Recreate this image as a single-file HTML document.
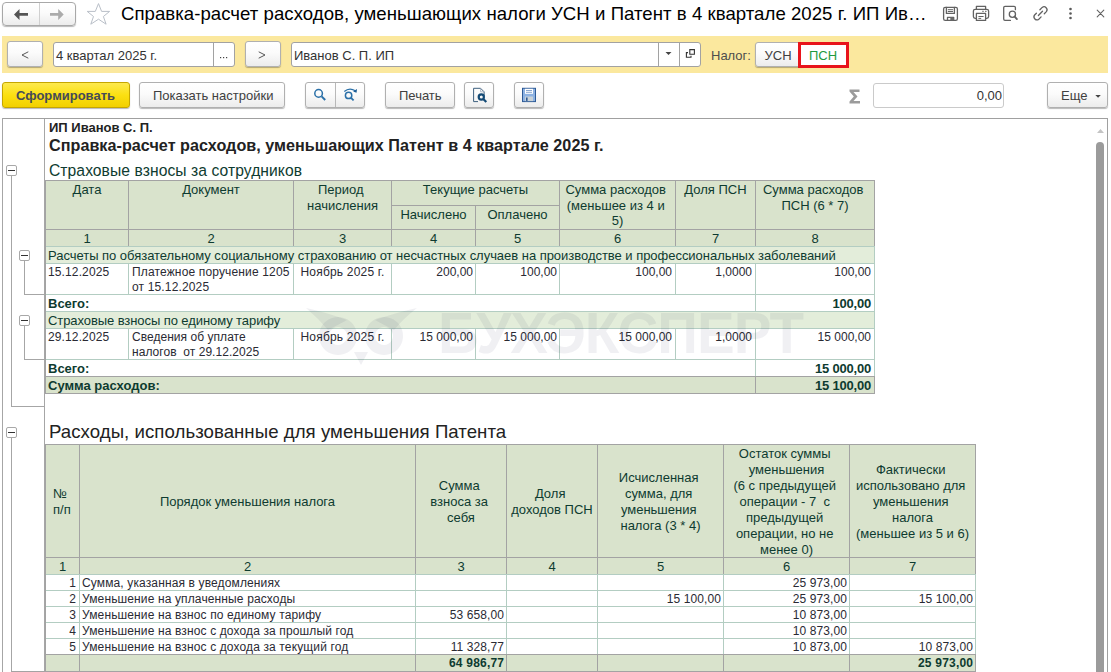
<!DOCTYPE html>
<html><head><meta charset="utf-8">
<style>
*{box-sizing:border-box;margin:0;padding:0}
html,body{width:1111px;height:672px;overflow:hidden;background:#fff;font-family:"Liberation Sans",sans-serif;color:#333;position:relative}
.a{position:absolute}
.btn{position:absolute;border:1px solid #b0b0b0;border-radius:3px;background:linear-gradient(#ffffff 0%,#fbfbfb 45%,#ececec 100%);box-shadow:0 1px 1px rgba(0,0,0,.28)}
.inp{position:absolute;border:1px solid #a2a2a2;border-radius:3px;background:#fff}
.t{position:absolute;white-space:nowrap;line-height:1}
.f13{font-size:13px}
svg{position:absolute;overflow:visible}
</style></head><body>
<!-- title bar -->
<div class="btn" style="left:2px;top:2px;width:74px;height:24px;border-radius:4px;border-color:#a8a8a8"></div>
<div class="a" style="left:39px;top:3px;width:1px;height:22px;background:#d0d0d0"></div>
<svg style="left:0;top:0" width="80" height="30"><path d="M14 14.4 L19.5 9 L19.5 13.1 L28 13.1 L28 15.8 L19.5 15.8 L19.5 19.9 Z" fill="#555"/><path d="M63.7 14.4 L58.2 9 L58.2 13.1 L50 13.1 L50 15.8 L58.2 15.8 L58.2 19.9 Z" fill="#ababab"/></svg>
<svg style="left:0;top:0" width="120" height="30"><path d="M98.5 3.6 L101.6 11.4 L109.6 11.4 L103.4 16.5 L106.1 24.2 L98.5 19.2 L90.8 24.2 L93.5 16.5 L87.2 11.4 L95.3 11.4 Z" fill="none" stroke="#b9bfc8" stroke-width="1"/></svg>
<div class="t" style="left:121px;top:5px;font-size:18.6px;color:#000;letter-spacing:0.04px">Справка-расчет расходов, уменьшающих налоги УСН и Патент в 4 квартале 2025 г. ИП Ив…</div>
<!-- title icons -->
<svg style="left:0;top:0" width="1111" height="30">
 <g fill="none" stroke="#626262" stroke-width="1.3" stroke-linecap="round" stroke-linejoin="round">
  <rect x="943.6" y="7.3" width="13.8" height="13" rx="1.6"/>
  <path d="M946.4 7.3 v6.1 h8 v-6.1"/>
  <path d="M948.2 9.7 h4.4 M948.2 11.5 h4.4" stroke-width="1"/>
  <path d="M947.5 20.3 v-3 h6.2 v3"/>
  <path d="M976.4 9.3 v-2.9 h9.2 v2.9"/>
  <path d="M976.2 18.3 h-1 a1.8 1.8 0 0 1 -1.8 -1.8 v-5.4 a1.8 1.8 0 0 1 1.8 -1.8 h11.6 a1.8 1.8 0 0 1 1.8 1.8 v5.4 a1.8 1.8 0 0 1 -1.8 1.8 h-1"/>
  <rect x="976.4" y="13.4" width="9.2" height="7"/>
  <path d="M978.8 16.5 h4.4 M978.8 18.4 h2" stroke-width="1"/>
  <path d="M982.6 11.3 h0.8 M985.4 11.3 h0.8" stroke-width="1"/>
  <path d="M1010.4 20.4 h-5.4 a1.3 1.3 0 0 1 -1.3 -1.3 v-11.5 a1.3 1.3 0 0 1 1.3 -1.3 h9.1 a1.3 1.3 0 0 1 1.3 1.3 v2.1"/>
  <circle cx="1012.4" cy="14.3" r="3.1"/>
  <path d="M1014.7 16.7 l2.2 2.4" stroke-width="1.9"/>
  <path d="M1039.9 9.7 L1042.2 7.4 A3 3 0 0 1 1046.4 11.6 L1044.3 13.7"/>
  <path d="M1036.4 13.2 L1034.6 15.0 A3 3 0 0 0 1038.8 19.2 L1041.1 16.9"/>
  <path d="M1038.4 15.5 L1042.5 11.3"/>
  <path d="M1097.2 10.2 l6.6 6.6 M1103.8 10.2 l-6.6 6.6" stroke-width="1.1"/>
 </g>
 <rect x="950.3" y="17.3" width="2.8" height="3" fill="#6a6a6a"/>
 <g fill="#5a5a5a"><circle cx="1070.5" cy="9" r="1.3"/><circle cx="1070.5" cy="13.5" r="1.3"/><circle cx="1070.5" cy="18" r="1.3"/></g>
</svg>

<!-- yellow bar -->
<div class="a" style="left:2px;top:36px;width:1106px;height:37px;background:#fbe89e"></div>
<div class="btn" style="left:7px;top:41px;width:36px;height:26px"></div>
<svg style="left:0;top:0" width="60" height="70"><path d="M28.3 51.8 L22 55 L28.3 58.2" fill="none" stroke="#444" stroke-width="0.9"/></svg>
<div class="inp" style="left:53px;top:42px;width:182px;height:25px"></div>
<div class="a" style="left:213px;top:43px;width:1px;height:23px;background:#a2a2a2"></div>
<div class="t f13" style="left:56px;top:49px;color:#333">4 квартал 2025 г.</div>
<svg style="left:0;top:0" width="240" height="70"><g fill="#444"><rect x="220" y="57" width="1.2" height="1.2"/><rect x="223" y="57" width="1.2" height="1.2"/><rect x="226" y="57" width="1.2" height="1.2"/></g></svg>
<div class="btn" style="left:245px;top:41px;width:36px;height:26px"></div>
<svg style="left:0;top:0" width="300" height="70"><path d="M258.7 51.8 L265 55 L258.7 58.2" fill="none" stroke="#444" stroke-width="0.9"/></svg>
<div class="inp" style="left:291px;top:42px;width:410px;height:25px"></div>
<div class="a" style="left:658px;top:43px;width:1px;height:23px;background:#a2a2a2"></div>
<div class="a" style="left:679px;top:43px;width:1px;height:23px;background:#a2a2a2"></div>
<div class="t f13" style="left:294px;top:49px;color:#333">Иванов С. П. ИП</div>
<svg style="left:0;top:0" width="720" height="70"><path d="M665.5 52 h6 l-3 3 z" fill="#444"/><g fill="none" stroke="#333" stroke-width="1.1"><path d="M689.8 49.6 h4.6 v4.6 h-4.6 z"/><path d="M688 52.6 h-1.6 v4.6 h4.6 v-1.4"/></g></svg>
<div class="t f13" style="left:711px;top:49px;color:#4d4d4d">Налог:</div>
<div class="btn" style="left:755px;top:42px;width:50px;height:25px"></div>
<div class="t f13" style="left:764.5px;top:49px;color:#404040">УСН</div>
<div class="a" style="left:798px;top:42px;width:51px;height:26px;border:3px solid #e8141b;background:#fff"></div>
<div class="t f13" style="left:809px;top:49px;color:#1f9a3e">ПСН</div>

<!-- toolbar -->
<div class="btn" style="left:2px;top:82px;width:128px;height:26px;background:linear-gradient(#fde94e,#fbe012 50%,#f2d000);border-color:#c5a600"></div>
<div class="t f13" style="left:16px;top:89px;font-weight:bold;color:#454b58">Сформировать</div>
<div class="btn" style="left:139px;top:82px;width:146px;height:26px"></div>
<div class="t f13" style="left:153px;top:89px;color:#404040">Показать настройки</div>
<div class="btn" style="left:305px;top:82px;width:60px;height:26px"></div>
<div class="a" style="left:335px;top:83px;width:1px;height:24px;background:#b8b8b8"></div>
<svg style="left:0;top:0" width="370" height="110"><g fill="none" stroke="#2a70a8" stroke-width="1.5"><circle cx="318.6" cy="93.4" r="3.8"/><path d="M321.6 96.4 l3.6 3.6" stroke-width="2"/><circle cx="348.6" cy="95.4" r="3.2"/><path d="M351 97.8 l2.6 2.6" stroke-width="1.8"/><path d="M344.3 91.6 q5 -4.5 11 -0.8" stroke-width="1.3"/></g><path d="M357 89 l-0.5 3.8 l-3.4 -1.3 z" fill="#1a5c96"/></svg>
<div class="btn" style="left:385px;top:82px;width:70px;height:26px"></div>
<div class="t f13" style="left:399px;top:89px;color:#404040">Печать</div>
<div class="btn" style="left:464px;top:82px;width:30px;height:26px"></div>
<svg style="left:0;top:0" width="500" height="110"><path d="M473.6 88.3 h7 l3.5 3.5 v4 M478 101.6 h-4.4 v-13.3" fill="none" stroke="#3d5f7e" stroke-width="1"/><path d="M480.6 88.3 v3.5 h3.5" fill="none" stroke="#9aaabb" stroke-width="0.8"/><circle cx="481.3" cy="97" r="2.6" fill="none" stroke="#134a75" stroke-width="2.2"/><path d="M483.3 99 l3 3" stroke="#134a75" stroke-width="2.2"/></svg>
<div class="btn" style="left:514px;top:82px;width:30px;height:26px"></div>
<svg style="left:0;top:0" width="550" height="110"><rect x="522.5" y="88.3" width="13" height="13.3" fill="#8db2e2" stroke="#2d5a96" stroke-width="1"/><rect x="525" y="88.8" width="8" height="5" fill="#fff"/><path d="M526 90.5 h6 M526 92.3 h6" stroke="#6b8fc2" stroke-width="0.8"/><rect x="525" y="96.5" width="8" height="4.6" fill="#c9d2d8"/><rect x="526" y="97.5" width="1.6" height="3.4" fill="#2d5a96"/></svg>

<svg style="left:0;top:0" width="870" height="110"><path d="M849.5 89.5 h10 v2.5 h-6 l4 4.5 l-4 4.5 h6.5 v2.5 h-10.5 v-2 l4.3 -5 l-4.3 -5 z" fill="#9b9b9b"/></svg>
<div class="inp" style="left:873px;top:83px;width:131px;height:25px;border-color:#cacaca"></div>
<div class="t f13" style="right:109px;top:89px;color:#333">0,00</div>
<div class="btn" style="left:1047px;top:82px;width:61px;height:26px"></div>
<div class="t f13" style="left:1061px;top:89px;color:#404040">Еще</div>
<svg style="left:0;top:0" width="1111" height="110"><path d="M1095.3 95 h5.5 l-2.75 2.8 z" fill="#444"/></svg>

<!-- report frame -->
<div class="a" style="left:2px;top:118px;width:1106px;height:560px;border:1px solid #a0a0a0"></div>
<div class="t" style="top:121px;font-size:13px;color:#222;font-weight:bold;left:49px;">ИП Иванов С. П.</div>
<div class="t" style="top:137px;font-size:16.17px;color:#222;font-weight:bold;letter-spacing:0.03px;left:49px;">Справка-расчет расходов, уменьшающих Патент в 4 квартале 2025 г.</div>
<div class="t" style="top:163px;font-size:15.65px;color:#0e3b30;letter-spacing:0.07px;left:49px;">Страховые взносы за сотрудников</div>
<div class="a" style="left:45px;top:180px;width:830px;height:50px;background:#d9e3cc"></div>
<div class="a" style="left:45px;top:229px;width:830px;height:17px;background:#d9e3cc"></div>
<div class="a" style="left:45px;top:246px;width:830px;height:17px;background:#e3edda"></div>
<div class="a" style="left:45px;top:311px;width:830px;height:17px;background:#e3edda"></div>
<div class="a" style="left:45px;top:376px;width:830px;height:17px;background:#d9e3cc"></div>
<div class="a" style="left:45px;top:180px;width:830px;height:1px;background:#a3a3a3"></div>
<div class="a" style="left:391px;top:205px;width:168px;height:1px;background:#a3a3a3"></div>
<div class="a" style="left:45px;top:229px;width:830px;height:1px;background:#a3a3a3"></div>
<div class="a" style="left:45px;top:246px;width:830px;height:1px;background:#b3cdc2"></div>
<div class="a" style="left:45px;top:263px;width:830px;height:1px;background:#b3cdc2"></div>
<div class="a" style="left:45px;top:294px;width:830px;height:1px;background:#b3cdc2"></div>
<div class="a" style="left:45px;top:311px;width:830px;height:1px;background:#b3cdc2"></div>
<div class="a" style="left:45px;top:328px;width:830px;height:1px;background:#b3cdc2"></div>
<div class="a" style="left:45px;top:359px;width:830px;height:1px;background:#b3cdc2"></div>
<div class="a" style="left:45px;top:376px;width:830px;height:1px;background:#a3a3a3"></div>
<div class="a" style="left:45px;top:393px;width:830px;height:1px;background:#a3a3a3"></div>
<div class="a" style="left:45px;top:180px;width:1px;height:50px;background:#a3a3a3"></div>
<div class="a" style="left:128px;top:180px;width:1px;height:50px;background:#a3a3a3"></div>
<div class="a" style="left:293px;top:180px;width:1px;height:50px;background:#a3a3a3"></div>
<div class="a" style="left:391px;top:180px;width:1px;height:50px;background:#a3a3a3"></div>
<div class="a" style="left:475px;top:180px;width:1px;height:0px;background:#a3a3a3"></div>
<div class="a" style="left:559px;top:180px;width:1px;height:50px;background:#a3a3a3"></div>
<div class="a" style="left:675px;top:180px;width:1px;height:50px;background:#a3a3a3"></div>
<div class="a" style="left:755px;top:180px;width:1px;height:50px;background:#a3a3a3"></div>
<div class="a" style="left:874px;top:180px;width:1px;height:50px;background:#a3a3a3"></div>
<div class="a" style="left:475px;top:205px;width:1px;height:25px;background:#a3a3a3"></div>
<div class="a" style="left:45px;top:229px;width:1px;height:17px;background:#a3a3a3"></div>
<div class="a" style="left:128px;top:229px;width:1px;height:17px;background:#a3a3a3"></div>
<div class="a" style="left:293px;top:229px;width:1px;height:17px;background:#a3a3a3"></div>
<div class="a" style="left:391px;top:229px;width:1px;height:17px;background:#a3a3a3"></div>
<div class="a" style="left:475px;top:229px;width:1px;height:17px;background:#a3a3a3"></div>
<div class="a" style="left:559px;top:229px;width:1px;height:17px;background:#a3a3a3"></div>
<div class="a" style="left:675px;top:229px;width:1px;height:17px;background:#a3a3a3"></div>
<div class="a" style="left:755px;top:229px;width:1px;height:17px;background:#a3a3a3"></div>
<div class="a" style="left:874px;top:229px;width:1px;height:17px;background:#a3a3a3"></div>
<div class="a" style="left:45px;top:263px;width:1px;height:32px;background:#b3cdc2"></div>
<div class="a" style="left:128px;top:263px;width:1px;height:32px;background:#b3cdc2"></div>
<div class="a" style="left:293px;top:263px;width:1px;height:32px;background:#b3cdc2"></div>
<div class="a" style="left:391px;top:263px;width:1px;height:32px;background:#b3cdc2"></div>
<div class="a" style="left:475px;top:263px;width:1px;height:32px;background:#b3cdc2"></div>
<div class="a" style="left:559px;top:263px;width:1px;height:32px;background:#b3cdc2"></div>
<div class="a" style="left:675px;top:263px;width:1px;height:32px;background:#b3cdc2"></div>
<div class="a" style="left:755px;top:263px;width:1px;height:32px;background:#b3cdc2"></div>
<div class="a" style="left:874px;top:263px;width:1px;height:32px;background:#b3cdc2"></div>
<div class="a" style="left:45px;top:328px;width:1px;height:32px;background:#b3cdc2"></div>
<div class="a" style="left:128px;top:328px;width:1px;height:32px;background:#b3cdc2"></div>
<div class="a" style="left:293px;top:328px;width:1px;height:32px;background:#b3cdc2"></div>
<div class="a" style="left:391px;top:328px;width:1px;height:32px;background:#b3cdc2"></div>
<div class="a" style="left:475px;top:328px;width:1px;height:32px;background:#b3cdc2"></div>
<div class="a" style="left:559px;top:328px;width:1px;height:32px;background:#b3cdc2"></div>
<div class="a" style="left:675px;top:328px;width:1px;height:32px;background:#b3cdc2"></div>
<div class="a" style="left:755px;top:328px;width:1px;height:32px;background:#b3cdc2"></div>
<div class="a" style="left:874px;top:328px;width:1px;height:32px;background:#b3cdc2"></div>
<div class="a" style="left:45px;top:246px;width:1px;height:18px;background:#b3cdc2"></div>
<div class="a" style="left:874px;top:246px;width:1px;height:18px;background:#b3cdc2"></div>
<div class="a" style="left:45px;top:311px;width:1px;height:18px;background:#b3cdc2"></div>
<div class="a" style="left:874px;top:311px;width:1px;height:18px;background:#b3cdc2"></div>
<div class="a" style="left:45px;top:294px;width:1px;height:18px;background:#b3cdc2"></div>
<div class="a" style="left:755px;top:294px;width:1px;height:18px;background:#b3cdc2"></div>
<div class="a" style="left:874px;top:294px;width:1px;height:18px;background:#b3cdc2"></div>
<div class="a" style="left:45px;top:359px;width:1px;height:18px;background:#b3cdc2"></div>
<div class="a" style="left:755px;top:359px;width:1px;height:18px;background:#b3cdc2"></div>
<div class="a" style="left:874px;top:359px;width:1px;height:18px;background:#b3cdc2"></div>
<div class="a" style="left:45px;top:376px;width:1px;height:18px;background:#a3a3a3"></div>
<div class="a" style="left:755px;top:376px;width:1px;height:18px;background:#a3a3a3"></div>
<div class="a" style="left:874px;top:376px;width:1px;height:18px;background:#a3a3a3"></div>
<div class="a" style="left:45px;top:180px;width:1px;height:214px;background:#a3a3a3"></div>
<div class="t" style="top:182px;font-size:13px;color:#0e3b30;line-height:15.7px;left:46px;width:82px;text-align:center;">Дата</div>
<div class="t" style="top:182px;font-size:13px;color:#0e3b30;line-height:15.7px;left:129px;width:164px;text-align:center;">Документ</div>
<div class="t" style="top:182px;font-size:13px;color:#0e3b30;line-height:15.7px;left:294px;width:97px;text-align:center;">Период&nbsp;<br>начисления</div>
<div class="t" style="top:182px;font-size:13px;color:#0e3b30;line-height:15.7px;left:392px;width:167px;text-align:center;">Текущие расчеты</div>
<div class="t" style="top:207px;font-size:13px;color:#0e3b30;line-height:15.7px;left:392px;width:83px;text-align:center;">Начислено</div>
<div class="t" style="top:207px;font-size:13px;color:#0e3b30;line-height:15.7px;left:476px;width:83px;text-align:center;">Оплачено</div>
<div class="t" style="top:182px;font-size:13px;color:#0e3b30;line-height:15.7px;left:560px;width:115px;text-align:center;">Сумма расходов&nbsp;<br>(меньшее из 4 и&nbsp;<br>5)</div>
<div class="t" style="top:182px;font-size:13px;color:#0e3b30;line-height:15.7px;left:676px;width:79px;text-align:center;">Доля ПСН</div>
<div class="t" style="top:182px;font-size:13px;color:#0e3b30;line-height:15.7px;left:756px;width:118px;text-align:center;">Сумма расходов&nbsp;<br>ПСН (6 * 7)</div>
<div class="t" style="top:232px;font-size:13px;color:#0e3b30;left:46px;width:82px;text-align:center;">1</div>
<div class="t" style="top:232px;font-size:13px;color:#0e3b30;left:129px;width:164px;text-align:center;">2</div>
<div class="t" style="top:232px;font-size:13px;color:#0e3b30;left:294px;width:97px;text-align:center;">3</div>
<div class="t" style="top:232px;font-size:13px;color:#0e3b30;left:392px;width:83px;text-align:center;">4</div>
<div class="t" style="top:232px;font-size:13px;color:#0e3b30;left:476px;width:83px;text-align:center;">5</div>
<div class="t" style="top:232px;font-size:13px;color:#0e3b30;left:560px;width:115px;text-align:center;">6</div>
<div class="t" style="top:232px;font-size:13px;color:#0e3b30;left:676px;width:79px;text-align:center;">7</div>
<div class="t" style="top:232px;font-size:13px;color:#0e3b30;left:756px;width:118px;text-align:center;">8</div>
<div class="t" style="top:249px;font-size:13px;color:#0e3b30;letter-spacing:-0.03px;left:48px;">Расчеты по обязательному социальному страхованию от несчастных случаев на производстве и профессиональных заболеваний</div>
<div class="t" style="top:314px;font-size:13px;color:#0e3b30;letter-spacing:-0.08px;left:48px;">Страховые взносы по единому тарифу</div>
<div class="t" style="top:265px;font-size:12px;color:#2a2a33;letter-spacing:0.12px;line-height:15px;left:48px;">15.12.2025</div>
<div class="t" style="top:265px;font-size:12px;color:#2a2a33;letter-spacing:0.15px;line-height:15px;left:132px;">Платежное поручение 1205<br>от 15.12.2025</div>
<div class="t" style="top:265px;font-size:12px;color:#2a2a33;letter-spacing:0.2px;line-height:15px;left:294px;width:97px;text-align:center;">Ноябрь 2025 г.</div>
<div class="t" style="top:265px;font-size:12px;color:#2a2a33;line-height:15px;left:393px;width:80px;text-align:right;">200,00</div>
<div class="t" style="top:265px;font-size:12px;color:#2a2a33;line-height:15px;left:477px;width:80px;text-align:right;">100,00</div>
<div class="t" style="top:265px;font-size:12px;color:#2a2a33;line-height:15px;left:592px;width:80px;text-align:right;">100,00</div>
<div class="t" style="top:265px;font-size:12px;color:#2a2a33;line-height:15px;left:672px;width:80px;text-align:right;">1,0000</div>
<div class="t" style="top:265px;font-size:12px;color:#2a2a33;line-height:15px;left:791px;width:80px;text-align:right;">100,00</div>
<div class="t" style="top:330px;font-size:12px;color:#2a2a33;letter-spacing:0.12px;line-height:15px;left:48px;">29.12.2025</div>
<div class="t" style="top:330px;font-size:12px;color:#2a2a33;letter-spacing:0.04px;line-height:15px;left:132px;">Сведения об уплате<br>налогов&nbsp; от 29.12.2025</div>
<div class="t" style="top:330px;font-size:12px;color:#2a2a33;letter-spacing:0.2px;line-height:15px;left:294px;width:97px;text-align:center;">Ноябрь 2025 г.</div>
<div class="t" style="top:330px;font-size:12px;color:#2a2a33;line-height:15px;left:393px;width:80px;text-align:right;">15 000,00</div>
<div class="t" style="top:330px;font-size:12px;color:#2a2a33;line-height:15px;left:477px;width:80px;text-align:right;">15 000,00</div>
<div class="t" style="top:330px;font-size:12px;color:#2a2a33;line-height:15px;left:592px;width:80px;text-align:right;">15 000,00</div>
<div class="t" style="top:330px;font-size:12px;color:#2a2a33;line-height:15px;left:672px;width:80px;text-align:right;">1,0000</div>
<div class="t" style="top:330px;font-size:12px;color:#2a2a33;line-height:15px;left:791px;width:80px;text-align:right;">15 000,00</div>
<div class="t" style="top:297px;font-size:13px;color:#0e3b30;font-weight:bold;left:48px;">Всего:</div>
<div class="t" style="top:297px;font-size:13px;color:#0e3b30;font-weight:bold;letter-spacing:-0.2px;left:771px;width:100px;text-align:right;">100,00</div>
<div class="t" style="top:362px;font-size:13px;color:#0e3b30;font-weight:bold;left:48px;">Всего:</div>
<div class="t" style="top:362px;font-size:13px;color:#0e3b30;font-weight:bold;letter-spacing:-0.2px;left:771px;width:100px;text-align:right;">15 000,00</div>
<div class="t" style="top:379px;font-size:13px;color:#0e3b30;font-weight:bold;left:48px;">Сумма расходов:</div>
<div class="t" style="top:379px;font-size:13px;color:#0e3b30;font-weight:bold;letter-spacing:-0.2px;left:771px;width:100px;text-align:right;">15 100,00</div>
<div class="t" style="top:423px;font-size:18.64px;color:#222;letter-spacing:0.045px;left:49px;">Расходы, использованные для уменьшения Патента</div>
<div class="a" style="left:45px;top:444px;width:931px;height:114px;background:#d9e3cc"></div>
<div class="a" style="left:45px;top:557px;width:931px;height:17px;background:#d9e3cc"></div>
<div class="a" style="left:45px;top:654px;width:931px;height:18px;background:#d9e3cc"></div>
<div class="a" style="left:45px;top:444px;width:931px;height:1px;background:#a3a3a3"></div>
<div class="a" style="left:45px;top:557px;width:931px;height:1px;background:#a3a3a3"></div>
<div class="a" style="left:45px;top:574px;width:931px;height:1px;background:#b3cdc2"></div>
<div class="a" style="left:45px;top:590px;width:931px;height:1px;background:#b3cdc2"></div>
<div class="a" style="left:45px;top:606px;width:931px;height:1px;background:#b3cdc2"></div>
<div class="a" style="left:45px;top:622px;width:931px;height:1px;background:#b3cdc2"></div>
<div class="a" style="left:45px;top:638px;width:931px;height:1px;background:#b3cdc2"></div>
<div class="a" style="left:45px;top:654px;width:931px;height:1px;background:#a3a3a3"></div>
<div class="a" style="left:45px;top:444px;width:1px;height:131px;background:#a3a3a3"></div>
<div class="a" style="left:45px;top:574px;width:1px;height:81px;background:#b3cdc2"></div>
<div class="a" style="left:45px;top:654px;width:1px;height:18px;background:#a3a3a3"></div>
<div class="a" style="left:79px;top:444px;width:1px;height:131px;background:#a3a3a3"></div>
<div class="a" style="left:79px;top:574px;width:1px;height:81px;background:#b3cdc2"></div>
<div class="a" style="left:79px;top:654px;width:1px;height:18px;background:#a3a3a3"></div>
<div class="a" style="left:415px;top:444px;width:1px;height:131px;background:#a3a3a3"></div>
<div class="a" style="left:415px;top:574px;width:1px;height:81px;background:#b3cdc2"></div>
<div class="a" style="left:415px;top:654px;width:1px;height:18px;background:#a3a3a3"></div>
<div class="a" style="left:506px;top:444px;width:1px;height:131px;background:#a3a3a3"></div>
<div class="a" style="left:506px;top:574px;width:1px;height:81px;background:#b3cdc2"></div>
<div class="a" style="left:506px;top:654px;width:1px;height:18px;background:#a3a3a3"></div>
<div class="a" style="left:597px;top:444px;width:1px;height:131px;background:#a3a3a3"></div>
<div class="a" style="left:597px;top:574px;width:1px;height:81px;background:#b3cdc2"></div>
<div class="a" style="left:597px;top:654px;width:1px;height:18px;background:#a3a3a3"></div>
<div class="a" style="left:723px;top:444px;width:1px;height:131px;background:#a3a3a3"></div>
<div class="a" style="left:723px;top:574px;width:1px;height:81px;background:#b3cdc2"></div>
<div class="a" style="left:723px;top:654px;width:1px;height:18px;background:#a3a3a3"></div>
<div class="a" style="left:849px;top:444px;width:1px;height:131px;background:#a3a3a3"></div>
<div class="a" style="left:849px;top:574px;width:1px;height:81px;background:#b3cdc2"></div>
<div class="a" style="left:849px;top:654px;width:1px;height:18px;background:#a3a3a3"></div>
<div class="a" style="left:975px;top:444px;width:1px;height:131px;background:#a3a3a3"></div>
<div class="a" style="left:975px;top:574px;width:1px;height:81px;background:#b3cdc2"></div>
<div class="a" style="left:975px;top:654px;width:1px;height:18px;background:#a3a3a3"></div>
<div class="a" style="left:45px;top:444px;width:1px;height:228px;background:#a3a3a3"></div>
<div class="t" style="top:485.5px;font-size:13px;color:#0e3b30;line-height:16px;left:53px;">№<br>п/п</div>
<div class="t" style="top:493.5px;font-size:13px;color:#0e3b30;line-height:16px;left:80px;width:335px;text-align:center;">Порядок уменьшения налога</div>
<div class="t" style="top:477.5px;font-size:13px;color:#0e3b30;line-height:16px;left:416px;width:90px;text-align:center;">Сумма&nbsp;<br>взноса за&nbsp;<br>себя</div>
<div class="t" style="top:485.5px;font-size:13px;color:#0e3b30;line-height:16px;left:507px;width:90px;text-align:center;">Доля&nbsp;<br>доходов ПСН</div>
<div class="t" style="top:469.5px;font-size:13px;color:#0e3b30;line-height:16px;left:598px;width:125px;text-align:center;">Исчисленная&nbsp;<br>сумма, для&nbsp;<br>уменьшения&nbsp;<br>налога (3 * 4)</div>
<div class="t" style="top:445.5px;font-size:13px;color:#0e3b30;line-height:16px;left:724px;width:125px;text-align:center;">Остаток суммы&nbsp;<br>уменьшения<br>(6 с предыдущей&nbsp;<br>операции - 7&nbsp; с&nbsp;<br>предыдущей&nbsp;<br>операции, но не&nbsp;<br>менее 0)</div>
<div class="t" style="top:461.5px;font-size:13px;color:#0e3b30;line-height:16px;left:850px;width:125px;text-align:center;">Фактически&nbsp;<br>использовано для&nbsp;<br>уменьшения&nbsp;<br>налога<br>(меньшее из 5 и 6)</div>
<div class="t" style="top:560px;font-size:13px;color:#0e3b30;left:46px;width:33px;text-align:center;">1</div>
<div class="t" style="top:560px;font-size:13px;color:#0e3b30;left:80px;width:335px;text-align:center;">2</div>
<div class="t" style="top:560px;font-size:13px;color:#0e3b30;left:416px;width:90px;text-align:center;">3</div>
<div class="t" style="top:560px;font-size:13px;color:#0e3b30;left:507px;width:90px;text-align:center;">4</div>
<div class="t" style="top:560px;font-size:13px;color:#0e3b30;left:598px;width:125px;text-align:center;">5</div>
<div class="t" style="top:560px;font-size:13px;color:#0e3b30;left:724px;width:125px;text-align:center;">6</div>
<div class="t" style="top:560px;font-size:13px;color:#0e3b30;left:850px;width:125px;text-align:center;">7</div>
<div class="t" style="top:577px;font-size:12px;color:#2a2a33;left:46px;width:30px;text-align:right;">1</div>
<div class="t" style="top:577px;font-size:12px;color:#2a2a33;letter-spacing:0.13px;left:82px;">Сумма, указанная в уведомлениях</div>
<div class="t" style="top:577px;font-size:12px;color:#2a2a33;letter-spacing:0.1px;left:747.1px;width:100px;text-align:right;">25 973,00</div>
<div class="t" style="top:593px;font-size:12px;color:#2a2a33;left:46px;width:30px;text-align:right;">2</div>
<div class="t" style="top:593px;font-size:12px;color:#2a2a33;letter-spacing:0.13px;left:82px;">Уменьшение на уплаченные расходы</div>
<div class="t" style="top:593px;font-size:12px;color:#2a2a33;letter-spacing:0.1px;left:621.1px;width:100px;text-align:right;">15 100,00</div>
<div class="t" style="top:593px;font-size:12px;color:#2a2a33;letter-spacing:0.1px;left:747.1px;width:100px;text-align:right;">25 973,00</div>
<div class="t" style="top:593px;font-size:12px;color:#2a2a33;letter-spacing:0.1px;left:873.1px;width:100px;text-align:right;">15 100,00</div>
<div class="t" style="top:609px;font-size:12px;color:#2a2a33;left:46px;width:30px;text-align:right;">3</div>
<div class="t" style="top:609px;font-size:12px;color:#2a2a33;letter-spacing:0.13px;left:82px;">Уменьшение на взнос по единому тарифу</div>
<div class="t" style="top:609px;font-size:12px;color:#2a2a33;letter-spacing:0.1px;left:404.1px;width:100px;text-align:right;">53 658,00</div>
<div class="t" style="top:609px;font-size:12px;color:#2a2a33;letter-spacing:0.1px;left:747.1px;width:100px;text-align:right;">10 873,00</div>
<div class="t" style="top:625px;font-size:12px;color:#2a2a33;left:46px;width:30px;text-align:right;">4</div>
<div class="t" style="top:625px;font-size:12px;color:#2a2a33;letter-spacing:0.13px;left:82px;">Уменьшение на взнос с дохода за прошлый год</div>
<div class="t" style="top:625px;font-size:12px;color:#2a2a33;letter-spacing:0.1px;left:747.1px;width:100px;text-align:right;">10 873,00</div>
<div class="t" style="top:641px;font-size:12px;color:#2a2a33;left:46px;width:30px;text-align:right;">5</div>
<div class="t" style="top:641px;font-size:12px;color:#2a2a33;letter-spacing:0.13px;left:82px;">Уменьшение на взнос с дохода за текущий год</div>
<div class="t" style="top:641px;font-size:12px;color:#2a2a33;letter-spacing:0.1px;left:404.1px;width:100px;text-align:right;">11 328,77</div>
<div class="t" style="top:641px;font-size:12px;color:#2a2a33;letter-spacing:0.1px;left:747.1px;width:100px;text-align:right;">10 873,00</div>
<div class="t" style="top:641px;font-size:12px;color:#2a2a33;letter-spacing:0.1px;left:873.1px;width:100px;text-align:right;">10 873,00</div>
<div class="t" style="top:657px;font-size:12px;color:#0e3b30;font-weight:bold;letter-spacing:0.2px;left:404.2px;width:100px;text-align:right;">64 986,77</div>
<div class="t" style="top:657px;font-size:12px;color:#0e3b30;font-weight:bold;letter-spacing:0.2px;left:873.2px;width:100px;text-align:right;">25 973,00</div>
<div class="a" style="left:2px;top:118px;width:1px;height:554px;background:#a6a6a6"></div>
<div class="a" style="left:44px;top:119px;width:1px;height:553px;background:#a6a6a6"></div>
<div class="a" style="left:6px;top:165px;width:11px;height:11px;border:1px solid #a8a8a8;border-radius:2px;background:#fff"></div>
<div class="a" style="left:8px;top:170px;width:7px;height:1px;background:#333"></div>
<div class="a" style="left:11px;top:176px;width:1px;height:231px;background:#a6a6a6"></div>
<div class="a" style="left:11px;top:406px;width:34px;height:1px;background:#a6a6a6"></div>
<div class="a" style="left:19px;top:250px;width:11px;height:11px;border:1px solid #a8a8a8;border-radius:2px;background:#fff"></div>
<div class="a" style="left:21px;top:255px;width:7px;height:1px;background:#333"></div>
<div class="a" style="left:24px;top:261px;width:1px;height:34px;background:#a6a6a6"></div>
<div class="a" style="left:24px;top:294px;width:21px;height:1px;background:#a6a6a6"></div>
<div class="a" style="left:19px;top:315px;width:11px;height:11px;border:1px solid #a8a8a8;border-radius:2px;background:#fff"></div>
<div class="a" style="left:21px;top:320px;width:7px;height:1px;background:#333"></div>
<div class="a" style="left:24px;top:326px;width:1px;height:34px;background:#a6a6a6"></div>
<div class="a" style="left:24px;top:359px;width:21px;height:1px;background:#a6a6a6"></div>
<div class="a" style="left:6px;top:427px;width:11px;height:11px;border:1px solid #a8a8a8;border-radius:2px;background:#fff"></div>
<div class="a" style="left:8px;top:432px;width:7px;height:1px;background:#333"></div>
<div class="a" style="left:11px;top:438px;width:1px;height:234px;background:#a6a6a6"></div>
<div class="a" style="left:11px;top:671px;width:965px;height:1px;background:#a3a3a3"></div>
<svg style="left:0;top:0" width="1111" height="672"><g fill="rgba(30,30,70,0.065)"><path fill-rule="evenodd" d="M338 317 a19 19 0 1 0 0.01 0 Z M338 327 a9 9 0 1 1 -0.01 0 Z M384 317 a19 19 0 1 0 0.01 0 Z M384 327 a9 9 0 1 1 -0.01 0 Z"/><path d="M306 308 Q325 312 347 320 Q338 325 328 330 Q318 318 306 308 Z"/><path d="M417 308 Q398 312 375 320 Q384 325 394 330 Q404 318 417 308 Z"/><path d="M354 352 L361 365 L368 352 Z"/></g></svg>
<div class="t" style="left:438px;top:305.5px;font-size:56.5px;font-weight:bold;letter-spacing:-1px;color:rgba(30,30,70,0.065)">БУХЭКСПЕРТ</div>
<svg style="left:0;top:0" width="1111" height="672"><path d="M1097 133 h7 l-3.5 -4 z" fill="#c4c4c4"/></svg>
<div class="a" style="left:1096px;top:142px;width:8px;height:540px;border-radius:4px;background:#9b9b9b"></div>

</body></html>
